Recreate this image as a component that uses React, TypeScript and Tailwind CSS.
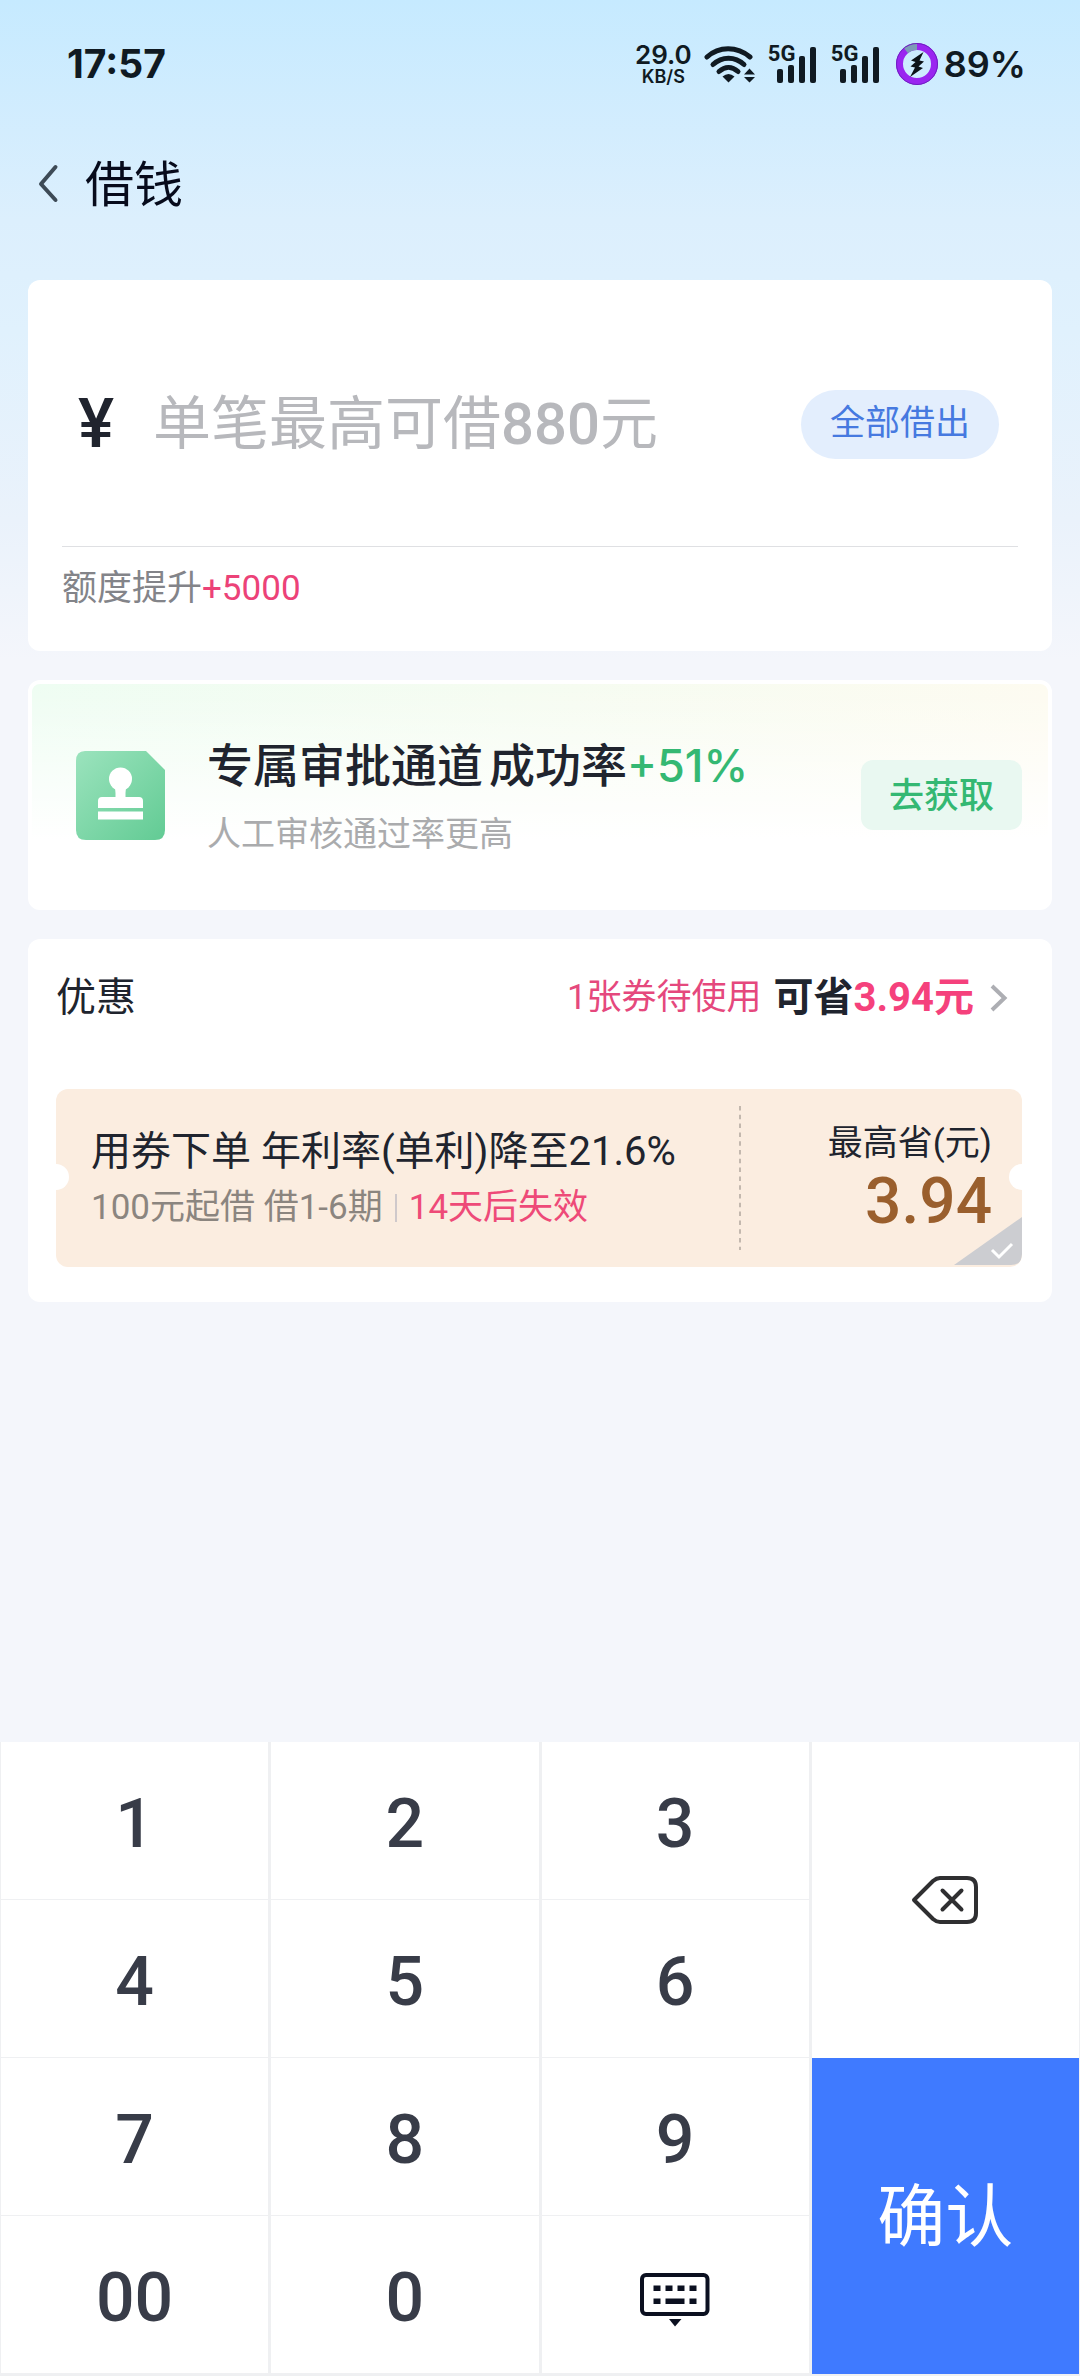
import { useState } from "react";

const keys = ["1", "2", "3", "4", "5", "6", "7", "8", "9", "00", "0"];

function WifiIcon() {
  return (
    <svg className="h-10 w-14" viewBox="0 0 56 40" fill="none" aria-hidden="true">
      <g stroke="#101a22" strokeWidth="5" strokeLinecap="round">
        <path d="M3 13C15 2 33 2 46 13" />
        <path d="M9 20.500C18 12 31 12 40 20.500" />
        <path d="M15 27.500C21 22 28 22 34 27.500" />
      </g>
      <path d="M18.500 32.500Q24.500 27.500 30.500 32.500L24.500 38.500Z" fill="#101a22" />
      <path d="M40 30.500L45.500 24.500L51 30.500ZM40 33L45.500 38.500L51 33Z" fill="#101a22" />
    </svg>
  );
}

function SignalIcon() {
  return (
    <span className="relative block h-10 w-[51px]">
      <span className="absolute top-0 left-0 text-[22px] leading-5 font-bold">5G</span>
      <svg className="h-10 w-full" viewBox="0 0 51 40" fill="#101a22" aria-hidden="true">
        <rect x="9" y="25" width="6" height="14" rx="2" />
        <rect x="20" y="21" width="6" height="18" rx="2" />
        <rect x="31" y="12" width="6" height="27" rx="2" />
        <rect x="42" y="3" width="6" height="36" rx="2" />
      </svg>
    </span>
  );
}

function BatteryRing() {
  return (
    <svg className="size-[42px]" viewBox="0 0 42 42" fill="none" aria-hidden="true">
      <circle cx="21" cy="21" r="17.500" stroke="#9a25f0" strokeWidth="7" />
      <path d="M9.800 7.500A17.500 17.500 0 0 1 21 3.500" stroke="#7d9bb8" strokeWidth="7" />
      <circle cx="21" cy="21" r="20.500" stroke="#6f1fc0" strokeWidth="1" />
      <path d="M27.500 9L15 17.500L19.500 19L14.500 23.500L19 24.500L14 34L27 25L22.500 23.500L28 18.500L23.500 17.500Z" fill="#0c1218" />
    </svg>
  );
}

function StampIcon() {
  return (
    <svg className="size-[89px] shrink-0" viewBox="0 0 89 89" aria-hidden="true">
      <defs>
        <linearGradient id="stamp" x1="0" y1="0" x2="1" y2="1">
          <stop offset="0" stopColor="#9be3bd" />
          <stop offset="1" stopColor="#62cb94" />
        </linearGradient>
      </defs>
      <path d="M9 0H70L89 19V79Q89 89 79 89H10Q0 89 0 79V10Q0 0 9 0Z" fill="url(#stamp)" />
      <circle cx="44.500" cy="28" r="11.500" fill="#fff" />
      <path d="M37 34Q39.500 37 39.500 42V46H26Q22 46 22 50V57H67V50Q67 46 63 46H49.500V42Q49.500 37 52 34Z" fill="#fff" />
      <rect x="22" y="60.500" width="45" height="8" fill="#fff" />
    </svg>
  );
}

function BackspaceIcon() {
  return (
    <svg className="h-[50px] w-[68px]" viewBox="0 0 68 50" fill="none" stroke="#2f2f31" strokeWidth="4" strokeLinejoin="round" strokeLinecap="round" aria-hidden="true">
      <path d="M3 25L22 6Q25.500 3 29 3H56Q65 3 65 12V38Q65 47 56 47H29Q25.500 47 22 44Z" />
      <path d="M31.500 15.500L50.500 34.500M50.500 15.500L31.500 34.500" />
    </svg>
  );
}

function KeyboardIcon() {
  return (
    <svg className="h-[56px] w-[70px]" viewBox="0 0 70 56" fill="none" aria-hidden="true">
      <rect x="2" y="3" width="65.500" height="39" rx="4" stroke="#0b1020" strokeWidth="4" />
      <g fill="#0b1020">
        <rect x="13.500" y="13.500" width="7" height="5.500" />
        <rect x="25.500" y="13.500" width="7" height="5.500" />
        <rect x="37.500" y="13.500" width="7" height="5.500" />
        <rect x="49.500" y="13.500" width="7" height="5.500" />
        <rect x="13.500" y="26.500" width="7" height="5.500" />
        <rect x="25.500" y="26.500" width="19" height="5.500" />
        <rect x="49.500" y="26.500" width="7" height="5.500" />
        <path d="M29 47H41.500L35 54.500Z" />
      </g>
    </svg>
  );
}

export default function App() {
  const [amount, setAmount] = useState("");
  const [selected, setSelected] = useState(false);

  return (
    <div className="flex min-h-screen flex-col bg-[#f4f6fb] bg-[linear-gradient(180deg,#c6eaff_0px,#dceffd_220px,#e0f1fd_330px,#eaf2fb_520px,#f4f6fb_660px)] font-['Roboto','Noto_Sans_CJK_SC',sans-serif] text-[#20242e]">
      <div className="flex h-32 items-center justify-between pr-[54px] pl-[67px] font-['Inter',sans-serif] text-[#101a22]">
        <span className="text-[39px] leading-10 font-bold">17:57</span>
        <div className="flex items-center">
          <span className="flex flex-col items-center gap-0.5 font-semibold">
            <span className="text-[26px] leading-6">29.0</span>
            <span className="text-[18px] leading-4">KB/S</span>
          </span>
          <span className="ml-3">
            <WifiIcon />
          </span>
          <span className="ml-2 flex gap-3 font-['Roboto',sans-serif]">
            <SignalIcon />
            <SignalIcon />
          </span>
          <span className="ml-3.5">
            <BatteryRing />
          </span>
          <span className="ml-1.5 text-[36px] leading-10 font-semibold">89%</span>
        </div>
      </div>

      <header className="flex h-28 items-center pl-9">
        <button type="button" aria-label="返回" className="w-[49px]">
          <svg className="h-10 w-6" viewBox="0 0 24 40" fill="none" stroke="#3d4a56" strokeWidth="4" strokeLinecap="round" strokeLinejoin="round" aria-hidden="true">
            <path d="M19.500 3L5 20L19.500 36" />
          </svg>
        </button>
        <h1 className="pt-1 text-[49px] leading-14 text-[#070b1c]">借钱</h1>
      </header>

      <main className="flex flex-col gap-[29px] px-[28px] pt-10 pb-10">
        <section className="rounded-xl bg-white px-[34px]">
          <div className="flex h-[267px] items-center border-b border-[#dfe0e3] pt-[22px] pr-[19px] pl-4">
            <label htmlFor="amount" className="w-[75px] text-[68px] leading-20 font-medium">
              ¥
            </label>
            <div className="relative h-20 min-w-0 flex-1 text-[58px] leading-20">
              <input
                id="amount"
                inputMode="none"
                value={amount}
                onChange={(e) => setAmount(e.target.value)}
                className="size-full bg-transparent font-medium outline-none"
              />
              {amount === "" && (
                <span className="pointer-events-none absolute inset-0 whitespace-nowrap text-[#b7b8bc]">
                  单笔最高可借<span className="font-medium">880</span>元
                </span>
              )}
            </div>
            <button type="button" className="h-[69px] rounded-full bg-[#e3eefd] px-[29px] text-[35px] leading-11 text-[#4679e0]" onClick={() => setAmount("880")}>
              全部借出
            </button>
          </div>
          <p className="pt-5 pb-10 text-[35px] leading-11 text-[#838489]">
            额度提升<span className="text-[#ec4278]">+5000</span>
          </p>
        </section>

        <section className="flex h-[230px] items-center rounded-xl border-4 border-white bg-white bg-[linear-gradient(180deg,transparent_0%,#ffffff_70%),linear-gradient(90deg,#eefdf2_0%,#fdfbf0_100%)] pr-[26px] pl-11">
          <StampIcon />
          <div className="ml-[42px] flex-1 pt-1">
            <h2 className="flex gap-1.5 text-[46px] leading-15 font-medium">
              <span>专属审批通道</span>
              <span>
                成功率<span className="font-['Inter',sans-serif] text-[45px] text-[#34b873]">+51%</span>
              </span>
            </h2>
            <p className="mt-3.5 text-[34px] leading-12 text-[#aaabad]">人工审核通过率更高</p>
          </div>
          <button type="button" className="h-[70px] rounded-xl bg-[#e9f8f1] px-7 pt-1 text-[35px] leading-11 font-medium text-[#34b873]">
            去获取
          </button>
        </section>

        <section className="rounded-xl bg-white pr-[30px] pb-[35px] pl-[28px]">
          <div className="flex h-[116px] items-center justify-between pt-0.5 pr-3">
            <h2 className="text-[40px] leading-12">优惠</h2>
            <button type="button" className="flex items-center">
              <span className="text-[35px] leading-12 text-[#e5487d]">1张券待使用</span>
              <span className="ml-3 text-[40px] leading-12 font-bold">
                可省<span className="text-[#f5417c]">3.94元</span>
              </span>
              <svg className="ml-3 h-8 w-6" viewBox="0 0 24 32" fill="none" stroke="#adaeb3" strokeWidth="4" aria-hidden="true">
                <path d="M6 4L18.500 16L6 28" />
              </svg>
            </button>
          </div>

          <label className="relative mt-[34px] flex h-[178px] items-center overflow-hidden rounded-xl bg-[#fbede0]">
            <span className="absolute top-[75px] -left-[13px] size-[26px] rounded-full bg-white" />
            <span className="absolute top-[75px] -right-[13px] size-[26px] rounded-full bg-white" />
            <span className="flex flex-1 flex-col pt-1 pl-[35px]">
              <span className="text-[40px] leading-14">用券下单 年利率(单利)降至21.6%</span>
              <span className="flex items-center text-[35px] leading-14 text-[#8b857f]">
                100元起借 借1-6期
                <span className="mx-3 h-7 w-0.5 bg-[#cfc9cb]" />
                <span className="text-[#ee4a78]">14天后失效</span>
              </span>
            </span>
            <svg className="h-[144px] w-0.5" viewBox="0 0 2 144" aria-hidden="true">
              <path d="M1 0V144" stroke="#c3b8ae" strokeWidth="2" strokeDasharray="4.500 4.300" />
            </svg>
            <span className="flex w-[281px] flex-col gap-1 pr-[30px] text-right">
              <span className="text-[35px] leading-11">最高省(元)</span>
              <span className="text-[64px] leading-16 font-medium text-[#9a5f2d]">3.94</span>
            </span>
            <input
              type="checkbox"
              aria-label="使用优惠券"
              checked={selected}
              onChange={(e) => setSelected(e.target.checked)}
              className="absolute right-0 bottom-0 h-12 w-[68px] appearance-none"
            />
            <svg className="pointer-events-none absolute right-0 bottom-0.5 h-12 w-[68px]" viewBox="0 0 68 48" fill="none" aria-hidden="true">
              <path d="M68 0V37Q68 48 57 48H0Z" fill={selected ? "#9a5f2d" : "#cccdd1"} />
              <path d="M38 33L45 40L58 27" stroke="#fff" strokeWidth="3" />
            </svg>
          </label>
        </section>
      </main>

      <div className="mt-auto grid grid-cols-4 grid-rows-[repeat(4,158px)] gap-x-[3px] bg-[#eff0f2] px-px pb-0.5">
        <div className="col-span-3 row-span-4 grid grid-cols-3 grid-rows-subgrid gap-x-[3px]">
          {keys.map((k) => (
            <button key={k} type="button" className="border-b border-[#eff0f2] bg-white pt-1.5 text-[68px] leading-20 font-medium text-[#383c48]" onClick={() => setAmount(amount + k)}>
              {k}
            </button>
          ))}
          <button type="button" aria-label="收起键盘" className="flex items-center justify-center border-b border-[#eff0f2] bg-white pt-2.5">
            <KeyboardIcon />
          </button>
        </div>
        <button type="button" aria-label="删除" className="row-span-2 flex items-center justify-center bg-white" onClick={() => setAmount(amount.slice(0, -1))}>
          <BackspaceIcon />
        </button>
        <button type="button" className="row-span-2 bg-[#3f7aff] pt-1 text-[68px] leading-20 text-white">
          确认
        </button>
      </div>
    </div>
  );
}
